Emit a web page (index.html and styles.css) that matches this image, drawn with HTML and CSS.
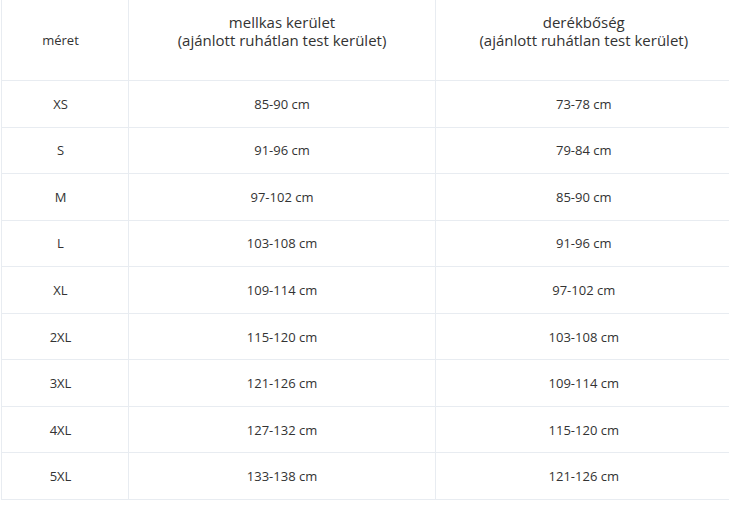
FILE: index.html
```html
<!DOCTYPE html>
<html lang="hu">
<head>
<meta charset="utf-8">
<link rel="stylesheet" href="styles.css">
</head>
<body>
<div class="wrap">
<table class="size-table">
  <colgroup>
    <col class="c1">
    <col class="c2">
    <col class="c3">
  </colgroup>
  <thead>
    <tr>
      <th class="first">méret</th>
      <th class="multi">mellkas kerület<br>(ajánlott ruhátlan test kerület)</th>
      <th class="multi">derékbőség<br>(ajánlott ruhátlan test kerület)</th>
    </tr>
  </thead>
  <tbody>
    <tr><td class="first">XS</td><td>85-90 cm</td><td>73-78 cm</td></tr>
    <tr><td class="first">S</td><td>91-96 cm</td><td>79-84 cm</td></tr>
    <tr><td class="first">M</td><td>97-102 cm</td><td>85-90 cm</td></tr>
    <tr><td class="first">L</td><td>103-108 cm</td><td>91-96 cm</td></tr>
    <tr><td class="first">XL</td><td>109-114 cm</td><td>97-102 cm</td></tr>
    <tr><td class="first">2XL</td><td>115-120 cm</td><td>103-108 cm</td></tr>
    <tr><td class="first">3XL</td><td>121-126 cm</td><td>109-114 cm</td></tr>
    <tr><td class="first">4XL</td><td>127-132 cm</td><td>115-120 cm</td></tr>
    <tr><td class="first">5XL</td><td>133-138 cm</td><td>121-126 cm</td></tr>
  </tbody>
</table>
</div>
</body>
</html>
```
FILE: styles.css
```css
html, body {
  margin: 0;
  padding: 0;
  background: #ffffff;
  overflow: hidden;
}
.wrap {
  padding-left: 1px;
  width: 730px;
}
.size-table {
  border-collapse: collapse;
  table-layout: fixed;
  width: 730px;
  font-family: "Open Sans", "Noto Sans", sans-serif;
  color: #333333;
}
.c1 { width: 127px; }
.c2 { width: 307px; }
.c3 { width: 296px; }
.size-table th,
.size-table td {
  border: 1px solid #e8ecf1;
  border-top: none;
  border-right: none;
  text-align: center;
  vertical-align: middle;
  padding: 0;
  font-weight: normal;
}
.size-table th {
  height: 62px;
  font-size: 15px;
  line-height: 18px;
}
.size-table th.first {
  font-size: 13px;
}
.size-table th.multi {
  padding-bottom: 18px;
}
.size-table td {
  height: 45.56px;
  font-size: 13px;
}
.size-table .first {
  padding-right: 9px;
}
```
